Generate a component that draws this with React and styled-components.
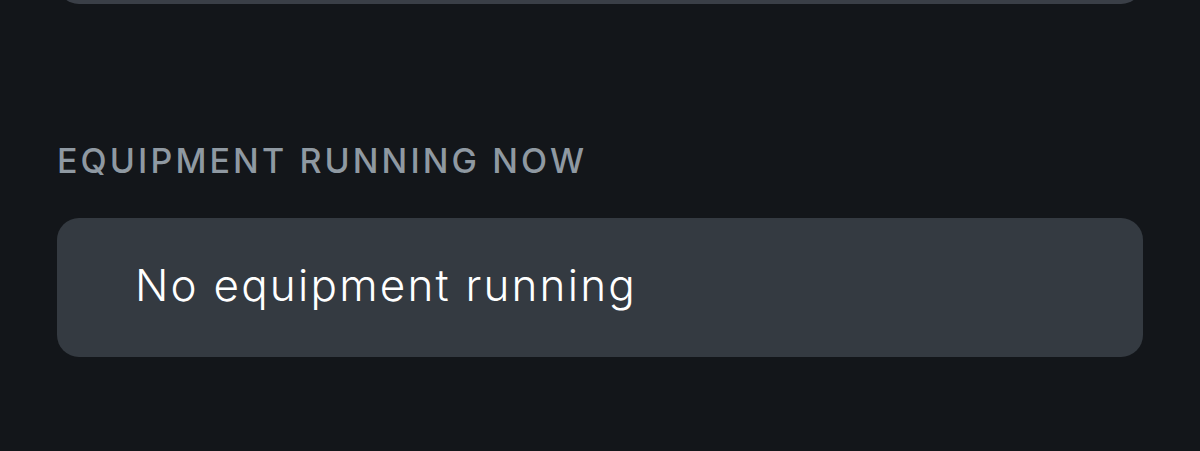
import React from "react";
import styled, { createGlobalStyle } from "styled-components";

const Global = createGlobalStyle`
  html, body { margin: 0; padding: 0; background: #13161a; }
  body { font-family: Inter, "Open Sans", sans-serif; }
`;

const Page = styled.div`
  width: 1200px;
  height: 451px;
  box-sizing: border-box;
  background: #13161a;
  padding: 0 57px;
  display: flex;
  flex-direction: column;
  overflow: hidden;
`;

const TopCard = styled.div`
  height: 80px;
  margin-top: -76px;
  border-radius: 22px;
  background: #3a3f47;
`;

const SectionLabel = styled.h2`
  margin: 137px 0 0 0;
  font-size: 34px;
  line-height: 40px;
  font-weight: 500;
  letter-spacing: 3.1px;
  color: #8f99a2;
  text-transform: uppercase;
`;

const Card = styled.div`
  margin-top: 37px;
  height: 139px;
  border-radius: 22px;
  background: #343a41;
  display: flex;
  align-items: center;
  padding-left: 78px;
`;

const Message = styled.span`
  font-size: 44px;
  line-height: 50px;
  margin-top: -6px;
  font-weight: 300;
  color: #ffffff;
  letter-spacing: 2.2px;
`;

export default function App() {
  return (
    <>
      <Global />
      <Page>
        <TopCard />
        <SectionLabel>Equipment Running Now</SectionLabel>
        <Card>
          <Message>No equipment running</Message>
        </Card>
      </Page>
    </>
  );
}
